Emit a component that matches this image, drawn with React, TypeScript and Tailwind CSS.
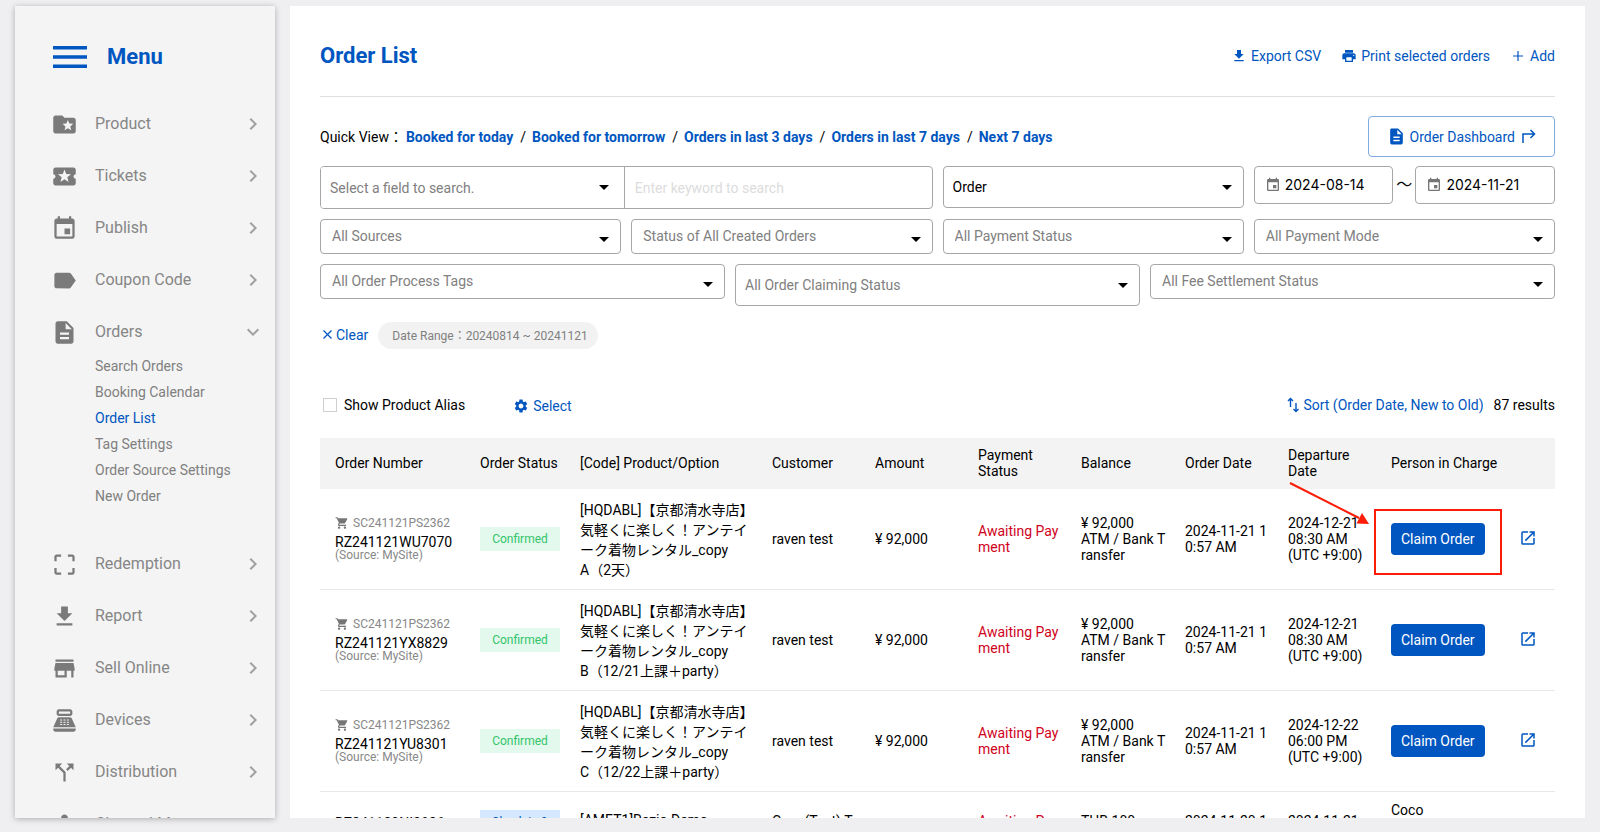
import type { ReactNode } from 'react';
import type { IconType } from 'react-icons';
import {
  MdArrowDropDown,
  MdCallSplit,
  MdChevronRight,
  MdCropFree,
  MdDescription,
  MdDeviceHub,
  MdEvent,
  MdExpandMore,
  MdFileDownload,
  MdFolderSpecial,
  MdLabel,
  MdLocalActivity,
  MdOpenInNew,
  MdPointOfSale,
  MdPrint,
  MdSettings,
  MdShoppingCart,
  MdStore,
} from 'react-icons/md';

type MenuItem = { label: string; icon: IconType; children?: string[] };

const menu: MenuItem[] = [
  { label: 'Product', icon: MdFolderSpecial },
  { label: 'Tickets', icon: MdLocalActivity },
  { label: 'Publish', icon: MdEvent },
  { label: 'Coupon Code', icon: MdLabel },
  {
    label: 'Orders',
    icon: MdDescription,
    children: [
      'Search Orders',
      'Booking Calendar',
      'Order List',
      'Tag Settings',
      'Order Source Settings',
      'New Order',
    ],
  },
  { label: 'Redemption', icon: MdCropFree },
  { label: 'Report', icon: MdFileDownload },
  { label: 'Sell Online', icon: MdStore },
  { label: 'Devices', icon: MdPointOfSale },
  { label: 'Distribution', icon: MdCallSplit },
  { label: 'Channel M', icon: MdDeviceHub },
];

const quickViews = [
  'Booked for today',
  'Booked for tomorrow',
  'Orders in last 3 days',
  'Orders in last 7 days',
  'Next 7 days',
];

type Order = {
  cart?: string;
  number: string;
  source: string;
  status: string;
  product: string;
  customer: string;
  amount: string;
  balance: string;
  ordered: string;
  departure: string;
  person?: string;
};

const orders: Order[] = [
  {
    cart: 'SC241121PS2362',
    number: 'RZ241121WU7070',
    source: 'MySite',
    status: 'Confirmed',
    product: '[HQDABL]【京都清水寺店】\n気軽くに楽しく！アンテイ\nーク着物レンタル_copy\nA（2天）',
    customer: 'raven test',
    amount: '¥ 92,000',
    balance: '¥ 92,000\nATM / Bank Transfer',
    ordered: '2024-11-21 10:57 AM',
    departure: '2024-12-21\n08:30 AM\n(UTC +9:00)',
  },
  {
    cart: 'SC241121PS2362',
    number: 'RZ241121YX8829',
    source: 'MySite',
    status: 'Confirmed',
    product: '[HQDABL]【京都清水寺店】\n気軽くに楽しく！アンテイ\nーク着物レンタル_copy\nB（12/21上課＋party）',
    customer: 'raven test',
    amount: '¥ 92,000',
    balance: '¥ 92,000\nATM / Bank Transfer',
    ordered: '2024-11-21 10:57 AM',
    departure: '2024-12-21\n08:30 AM\n(UTC +9:00)',
  },
  {
    cart: 'SC241121PS2362',
    number: 'RZ241121YU8301',
    source: 'MySite',
    status: 'Confirmed',
    product: '[HQDABL]【京都清水寺店】\n気軽くに楽しく！アンテイ\nーク着物レンタル_copy\nC（12/22上課＋party）',
    customer: 'raven test',
    amount: '¥ 92,000',
    balance: '¥ 92,000\nATM / Bank Transfer',
    ordered: '2024-11-21 10:57 AM',
    departure: '2024-12-22\n06:00 PM\n(UTC +9:00)',
  },
  {
    number: 'RZ241120NI3826',
    source: 'MySite',
    status: 'Check-in & Paid',
    product: '[AMET1]Rezio Demo\nProduct',
    customer: 'Coco(Test) Test',
    amount: 'THB 100',
    balance: 'THB 100\nCash',
    ordered: '2024-11-20 10:12 AM',
    departure: '2024-11-21\n08:30 AM',
    person: 'Coco\nTest\nManager',
  },
];

const columns = [
  { title: 'Order Number', width: 'w-[145px]' },
  { title: 'Order Status', width: 'w-[100px]' },
  { title: '[Code] Product/Option', width: 'w-[192px]' },
  { title: 'Customer', width: 'w-[103px]' },
  { title: 'Amount', width: 'w-[103px]' },
  { title: 'Payment Status', width: 'w-[103px]' },
  { title: 'Balance', width: 'w-[104px]' },
  { title: 'Order Date', width: 'w-[103px]' },
  { title: 'Departure Date', width: 'w-[103px]' },
  { title: 'Person in Charge', width: 'w-[130px]' },
  { title: '', width: 'w-[49px]' },
];

function Sidebar() {
  return (
    <aside className="w-[260px] shrink-0 overflow-hidden bg-[#f4f4f4] shadow-[0_1px_6px_rgba(0,0,0,0.28)]">
      <div className="flex h-[92px] items-center gap-5 pt-[10px] pl-[38px]">
        <button type="button" aria-label="Toggle menu" className="text-[#0056c0]">
          <svg width="34" height="22" viewBox="0 0 34 22" fill="currentColor">
            <path d="M0 0h34v3.600H0zM0 9.200h34v3.600H0zM0 18.400h34v3.600H0z" />
          </svg>
        </button>
        <span className="text-[22px] leading-7 font-bold text-[#0056c0]">Menu</span>
      </div>
      <nav>
        {menu.map(({ label, icon: Icon, children }) => (
          <div key={label}>
            <a href="#" className="flex h-[52px] items-center pr-[10px] pl-9 text-[#7a7a7a]">
              <Icon size={27} />
              <span className="ml-[17px] flex-1 text-base text-[#868686]">{label}</span>
              {children ? (
                <MdExpandMore size={24} className="text-[#a0a0a0]" />
              ) : (
                <MdChevronRight size={24} className="text-[#a0a0a0]" />
              )}
            </a>
            {children && (
              <ul className="-mt-[5px] mb-[29px] pl-20">
                {children.map((child) => (
                  <li key={child} className="h-[26px] text-sm leading-[26px]">
                    <a href="#" className={child === 'Order List' ? 'text-[#0056c0]' : 'text-[#808080]'}>
                      {child}
                    </a>
                  </li>
                ))}
              </ul>
            )}
          </div>
        ))}
      </nav>
    </aside>
  );
}

type SelectBoxProps = { label: string; tall?: boolean; dark?: boolean };

function SelectBox({ label, tall, dark }: SelectBoxProps) {
  return (
    <div className="relative">
      <select
        aria-label={label}
        className={`block w-full appearance-none rounded border border-[#a6a6a6] bg-white pr-8 text-sm ${
          tall ? 'h-[42px] pl-[9px]' : 'h-[35px] pb-[2px] pl-[11px]'
        } ${dark ? 'text-black' : 'text-[#808080]'}`}
      >
        <option>{label}</option>
      </select>
      <MdArrowDropDown
        size={24}
        className={`pointer-events-none absolute right-[5px] text-black ${tall ? 'top-[9px]' : 'top-2'}`}
      />
    </div>
  );
}

function DateBox({ label, value }: { label: string; value: string }) {
  return (
    <label className="flex h-[38px] min-w-0 flex-1 items-center rounded border border-[#a6a6a6] pl-[10px]">
      <MdEvent size={16} className="shrink-0 text-[#757575]" />
      <input
        aria-label={label}
        defaultValue={value}
        className="ml-1 w-full min-w-0 font-[Inter,sans-serif] text-sm text-black outline-none"
      />
    </label>
  );
}

function Filters() {
  return (
    <div className="mt-[9px] flex flex-col gap-[10px]">
      <div className="grid grid-cols-4 items-start gap-[10px]">
        <div className="col-span-2 grid grid-cols-[304fr_309fr] overflow-hidden rounded border border-[#a6a6a6]">
          <div className="relative">
            <select
              aria-label="Search field"
              className="block h-[41px] w-full appearance-none bg-white pr-8 pl-[9px] text-sm text-[#808080]"
            >
              <option>Select a field to search.</option>
            </select>
            <MdArrowDropDown
              size={24}
              className="pointer-events-none absolute top-2 right-2 text-black"
            />
          </div>
          <input
            aria-label="Keyword"
            placeholder="Enter keyword to search"
            className="h-[41px] border-l border-[#a6a6a6] px-[10px] text-sm outline-none placeholder:text-[#dcdcdc]"
          />
        </div>
        <SelectBox label="Order" tall dark />
        <div className="flex items-center">
          <DateBox label="Start date" value="2024-08-14" />
          <span className="w-[22px] text-center text-base">～</span>
          <DateBox label="End date" value="2024-11-21" />
        </div>
      </div>
      <div className="grid grid-cols-4 gap-[10px]">
        <SelectBox label="All Sources" />
        <SelectBox label="Status of All Created Orders" />
        <SelectBox label="All Payment Status" />
        <SelectBox label="All Payment Mode" />
      </div>
      <div className="grid grid-cols-3 items-start gap-[10px]">
        <SelectBox label="All Order Process Tags" />
        <SelectBox label="All Order Claiming Status" tall />
        <SelectBox label="All Fee Settlement Status" />
      </div>
    </div>
  );
}

// Red frame and arrow that point at the first claim button
function Callout() {
  return (
    <>
      <span className="pointer-events-none absolute -top-[14px] -left-[17px] h-[66px] w-32 border-2 border-[#fb1d08]" />
      <svg
        className="pointer-events-none absolute -top-[42px] -left-[102px]"
        width="84"
        height="46"
        viewBox="0 0 84 46"
        fill="none"
      >
        <path d="M1 2 70 37" stroke="#fb1d08" strokeWidth="2" />
        <path d="M80 43 67.500 42.500 73 32z" fill="#fb1d08" />
      </svg>
    </>
  );
}

function Cell({ children, className = 'py-[10px]' }: { children?: ReactNode; className?: string }) {
  return <td className={`pl-[15px] ${className}`}>{children}</td>;
}

function OrderRow({ order, highlighted }: { order: Order; highlighted: boolean }) {
  return (
    <tr className="border-b border-[#e8e8e8] leading-4">
      <Cell>
        {order.cart && (
          <div className="flex items-center gap-1 text-xs leading-[18px] text-[#888]">
            <MdShoppingCart size={14} className="text-[#757575]" />
            {order.cart}
          </div>
        )}
        <div className="leading-5">{order.number}</div>
        <div className="-mt-[6px] text-xs leading-[18px] text-[#888]">(Source: {order.source})</div>
      </Cell>
      <Cell>
        <div
          className={`w-20 px-2 text-center text-xs ${
            order.person ? 'bg-[#d4e8ff] py-[5px] leading-[14px] text-[#0056c0]' : 'bg-[#e3f9ed] leading-6 text-[#33c46b]'
          }`}
        >
          {order.status}
        </div>
      </Cell>
      <Cell className="pt-[11px] pb-[9px] leading-5 whitespace-pre">{order.product}</Cell>
      <Cell className="break-all">{order.customer}</Cell>
      <Cell>{order.amount}</Cell>
      <Cell className="break-all text-[#d0021b]">Awaiting Payment</Cell>
      <Cell className="pr-1 break-all whitespace-pre-line">{order.balance}</Cell>
      <Cell className="break-all">{order.ordered}</Cell>
      <Cell className="whitespace-pre">{order.departure}</Cell>
      <Cell className={order.person ? 'pt-[10px] pb-4 whitespace-pre' : ''}>
        {order.person ?? (
          <div className="relative w-fit">
            <button type="button" className="block h-8 rounded bg-[#0056c0] px-[10px] text-sm text-white">
              Claim Order
            </button>
            {highlighted && <Callout />}
          </div>
        )}
      </Cell>
      <Cell>
        <a href="#" aria-label={`Open ${order.number}`} className="block pb-[3px] text-[#0056c0]">
          <MdOpenInNew size={18} className="-ml-0.5" />
        </a>
      </Cell>
    </tr>
  );
}

function App() {
  return (
    <div className="flex h-screen gap-[15px] overflow-hidden bg-[#efeff1] pt-[6px] pr-[15px] pb-[14px] pl-[15px] font-[Roboto,'Noto_Sans_CJK_JP',sans-serif] text-sm text-black">
      <Sidebar />
      <main className="min-w-0 flex-1 overflow-hidden bg-white px-[30px]">
        <header className="flex h-[91px] items-center justify-between border-b border-[#e0e0e0] pt-[10px]">
          <h1 className="text-[22px] leading-7 font-bold text-[#0056c0]">Order List</h1>
          <div className="flex items-center gap-5 text-[#0056c0]">
            <button type="button" className="flex items-center gap-1">
              <MdFileDownload size={16} />
              Export CSV
            </button>
            <button type="button" className="flex items-center gap-1">
              <MdPrint size={16} />
              Print selected orders
            </button>
            <button type="button" className="flex items-center gap-[6px] pl-0.5">
              <svg width="12" height="12" viewBox="0 0 12 12" stroke="currentColor" strokeWidth="1.2">
                <path d="M6 1v10M1 6h10" />
              </svg>
              Add
            </button>
          </div>
        </header>

        <div className="mt-[19px] flex items-center justify-between">
          <div className="flex items-center">
            <span className="mr-[3px]">Quick View：</span>
            {quickViews.map((view, i) => (
              <span key={view}>
                {i > 0 && <span className="mr-[6px] ml-[7px]">/</span>}
                <a href="#" className="font-bold text-[#0056c0]">
                  {view}
                </a>
              </span>
            ))}
          </div>
          <button
            type="button"
            className="flex h-[41px] items-center rounded border border-[#7fabdf] px-[18px] text-[#0056c0]"
          >
            <MdDescription size={19} />
            <span className="ml-1">Order Dashboard</span>
            <svg
              className="ml-[6px]"
              width="15"
              height="15"
              viewBox="0 0 15 15"
              fill="none"
              stroke="currentColor"
              strokeWidth="1.5"
            >
              <path d="M2 14V5h11M9.500 1 13.500 5 9.500 9" />
            </svg>
          </button>
        </div>

        <Filters />

        <div className="mt-4 flex items-center gap-[10px]">
          <button type="button" className="flex items-center gap-1 pb-[2px] pl-[3px] text-[#0056c0]">
            <svg width="9" height="9" viewBox="0 0 9 9" stroke="currentColor" strokeWidth="1.2">
              <path d="M.5.5l8 8M8.500.5l-8 8" />
            </svg>
            Clear
          </button>
          <span className="rounded-full bg-[#f2f2f2] pt-[1px] pr-[10px] pl-[14px] text-xs leading-[26px] text-[#808080]">
            Date Range：20240814 ~ 20241121
          </span>
        </div>

        <div className="mt-[46px] flex h-5 items-center">
          <label className="flex items-center gap-[7px] pl-[3px]">
            <input type="checkbox" className="size-[14px] appearance-none border border-[#cfcfcf] bg-white" />
            Show Product Alias
          </label>
          <button type="button" className="ml-12 flex items-center gap-1 pt-[2px] text-[#0056c0]">
            <MdSettings size={16} />
            Select
          </button>
          <button type="button" className="ml-auto flex items-center gap-[3px] text-[#0056c0]">
            <svg width="13" height="16" viewBox="0 0 13 16" fill="none" stroke="currentColor" strokeWidth="1.4">
              <path d="M3.500 10V2M1 4l2.500-2.500L6 4M9 6v8M6.500 12 9 14.500l2.500-2.500" />
            </svg>
            Sort (Order Date, New to Old)
          </button>
          <span className="ml-[10px]">87 results</span>
        </div>

        <table className="mt-[23px] w-full table-fixed border-collapse">
          <thead>
            <tr className="h-[51px] bg-[#f3f3f3] text-left">
              {columns.map(({ title, width }) => (
                <th key={title} className={`pb-[2px] pl-[15px] leading-4 font-normal ${width}`}>
                  {title}
                </th>
              ))}
            </tr>
          </thead>
          <tbody>
            {orders.map((order, i) => (
              <OrderRow key={order.number} order={order} highlighted={i === 0} />
            ))}
          </tbody>
        </table>
      </main>
    </div>
  );
}

export default App;
